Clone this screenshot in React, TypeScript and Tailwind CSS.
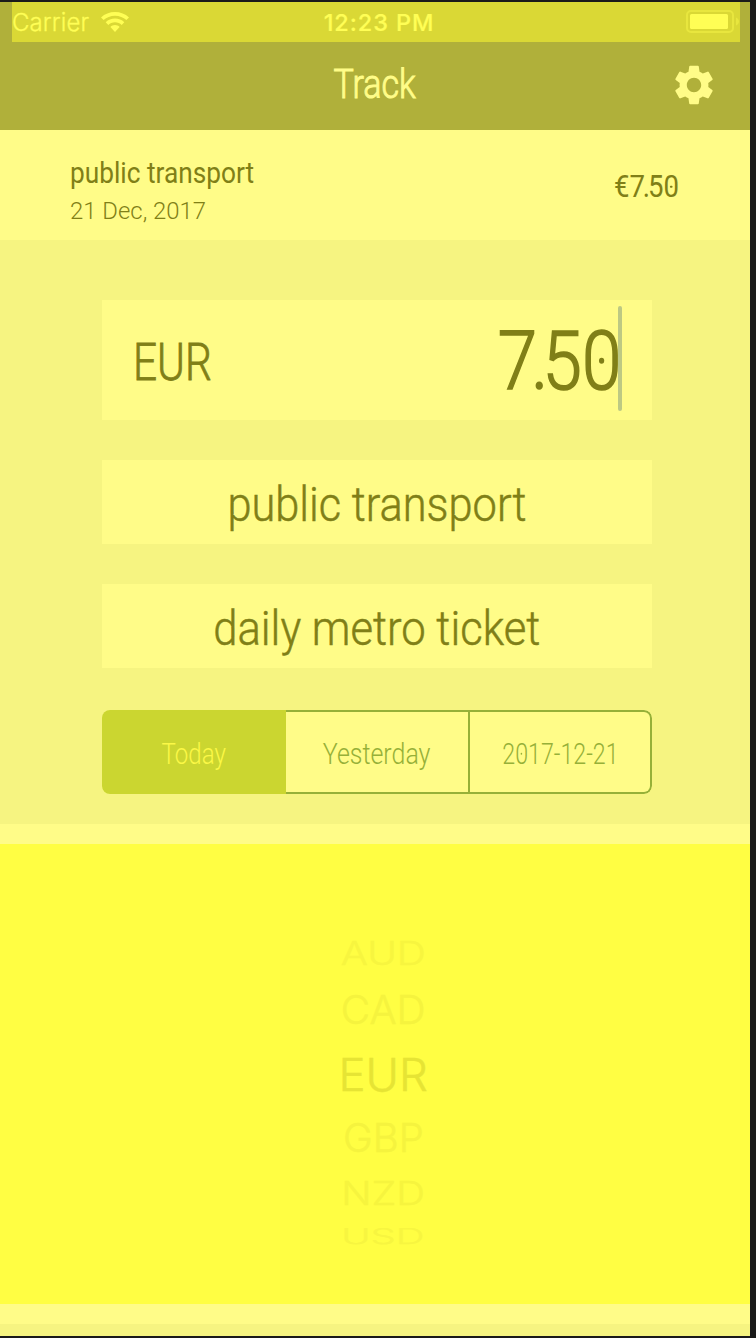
import { MdSettings } from 'react-icons/md';

const currencies = [
  { code: 'AUD', row: 'h-[56px]', text: 'text-[#f7f53f] text-[42px] scale-x-[0.96] scale-y-[0.76]' },
  { code: 'CAD', row: 'h-[56px]', text: 'text-[#f5f33e] text-[42px] scale-x-[0.96] scale-y-[0.93]' },
  { code: 'EUR', row: 'h-[73px]', text: 'text-[#e6e434] text-[45px] scale-x-[1.01]' },
  { code: 'GBP', row: 'h-[53px]', text: 'text-[#f5f33e] text-[42px] scale-x-[0.95] scale-y-[0.93]' },
  { code: 'NZD', row: 'h-[59px]', text: 'text-[#f6f43e] text-[42px] scale-x-[0.95] scale-y-[0.76]' },
  { code: 'USD', row: 'h-[26px]', text: 'text-[#f7f540] text-[42px] scale-x-[0.95] scale-y-[0.5]' },
];

const StatusBar = () => (
  <div className="ml-3 mr-[10px] h-10 bg-[#dad835] text-[#fffe55] font-[Inter,sans-serif] grid grid-cols-3 items-center leading-none">
    <div className="flex items-center gap-3">
      <span className="text-[24px] font-light [-webkit-text-stroke:0.3px] tracking-[0.1px] pt-[2px]">Carrier</span>
      <svg width="28" height="20" viewBox="0 0 28 20" fill="currentColor">
        <path d="M14 0C8.600 0 3.700 2 0 5.400L2.600 8.100C5.600 5.300 9.600 3.700 14 3.700S22.400 5.300 25.400 8.100L28 5.400C24.300 2 19.400 0 14 0Z" />
        <path d="M14 6.600C10.400 6.600 7.200 8 4.700 10.200L7.300 12.900C9.100 11.200 11.400 10.200 14 10.200S18.900 11.200 20.700 12.900L23.300 10.200C20.800 8 17.600 6.600 14 6.600Z" />
        <path d="M14 13C12.200 13 10.600 13.700 9.400 14.900L14 20L18.600 14.900C17.400 13.700 15.800 13 14 13Z" />
      </svg>
    </div>
    <span className="text-center text-[23.500px] font-medium [-webkit-text-stroke:0.2px] tracking-[0.9px] whitespace-nowrap pl-[6px] pt-[2px]">12:23 PM</span>
    <div className="flex justify-end items-center">
      <svg width="54" height="24" viewBox="0 0 54 24">
        <rect x="1" y="1" width="46" height="21" rx="4" fill="none" stroke="#e8e63e" strokeWidth="2" />
        <rect x="4" y="4" width="38" height="15" rx="1.500" fill="#fffe55" />
        <path d="M50 7.500C52 8.500 53 10 53 11.500S52 14.500 50 15.500Z" fill="#e8e63e" />
      </svg>
    </div>
  </div>
);

// Zero with a small dot in its counter
const Zero = () => (
  <span className="relative inline-block after:absolute after:left-1/2 after:top-1/2 after:size-[0.08em] after:-translate-x-1/2 after:-translate-y-1/2 after:rounded-full after:bg-current">
    0
  </span>
);

const App = () => {
  return (
    <div className="w-[756px] h-[1338px] overflow-hidden bg-[#1a1a1a] pt-[2px] pb-[2px] pr-[6px] font-[Roboto,sans-serif] text-[#807f17]">
      <header className="h-32 bg-[#b0b03a] text-[#fffc88]">
        <StatusBar />
        <div className="h-[88px] grid grid-cols-[1fr_auto_1fr] items-center">
          <span />
          <h1 className="text-[41px] leading-none font-light [-webkit-text-stroke:1px] scale-x-[0.83] pb-1">Track</h1>
          <MdSettings className="justify-self-end mr-8 mb-[2px] size-[48px]" />
        </div>
      </header>

      <section className="h-[110px] bg-[#fffc88] flex items-center justify-between pl-[70px] pr-[71px]">
        <div className="flex flex-col items-start pt-[13px]">
          <span className="text-[29px] leading-[38px] origin-left scale-x-[0.905]">public transport</span>
          <span className="text-[24.500px] leading-[38px] font-light origin-left scale-x-[0.975]">21 Dec, 2017</span>
        </div>
        <span className="text-[31px] leading-none origin-right scale-x-[0.89] pt-[3px]">
          €<span className="tracking-[-0.080em]">7.</span>5<Zero />
        </span>
      </section>

      <section className="h-[584px] bg-[#f6f481] px-[102px] pt-[60px]">
        <div className="w-[550px] flex flex-col gap-10">
          <div className="h-[120px] bg-[#fffc88] flex items-center justify-between pl-[31px] pr-[30px]">
            <span className="text-[51px] leading-none font-light [-webkit-text-stroke:0.8px] origin-left scale-x-[0.83] pt-1">EUR</span>
            <div className="flex items-center pb-[3px]">
              <span className="text-[81px] leading-none font-light [-webkit-text-stroke:1.6px] origin-right scale-x-[0.875] -mr-[3px] pt-[5px]">
                <span className="tracking-[-0.080em]">7.</span>5<Zero />
              </span>
              <span className="w-1 h-[105px] rounded-sm bg-[#bdc983]" />
            </div>
          </div>
          <div className="h-[84px] bg-[#fffc88] flex items-center justify-center">
            <span className="text-[49px] leading-none font-light [-webkit-text-stroke:0.5px] whitespace-nowrap scale-x-[0.885] pt-[5px]">public transport</span>
          </div>
          <div className="h-[84px] bg-[#fffc88] flex items-center justify-center">
            <span className="text-[49px] leading-none font-light [-webkit-text-stroke:0.5px] whitespace-nowrap scale-x-[0.89] pt-[5px]">daily metro ticket</span>
          </div>
        </div>

        <div className="mt-[42px] w-[550px] h-[84px] bg-[#fffc88] rounded-lg flex overflow-hidden text-[29px] leading-none font-light text-[#96b038]">
          <button className="w-[184px] bg-[#cbd630] text-[#fbf846]">
            <span className="inline-block scale-x-[0.83] pt-1">Today</span>
          </button>
          <button className="w-[184px] border-y-2 border-r-2 border-[#96b038]">
            <span className="inline-block scale-x-[0.86] pt-1">Yesterday</span>
          </button>
          <button className="w-[182px] border-y-2 border-r-2 border-[#96b038] rounded-r-lg">
            <span className="inline-block scale-x-[0.8] pt-1 pl-[2px]">2<Zero />17-12-21</span>
          </button>
        </div>
      </section>

      <div className="h-5 bg-[#fffc88]" />
      <section className="h-[460px] bg-[#fffe43] pt-[82px] pl-4 font-[Inter,sans-serif] font-light [-webkit-text-stroke:0.5px]">
        {currencies.map((currency) => (
          <div key={currency.code} className={`flex items-center justify-center ${currency.row}`}>
            <span className={`leading-none ${currency.text}`}>{currency.code}</span>
          </div>
        ))}
      </section>
      <div className="h-5 bg-[#fffc88]" />
      <div className="h-3 bg-[#f6f481]" />
    </div>
  );
};

export default App;
